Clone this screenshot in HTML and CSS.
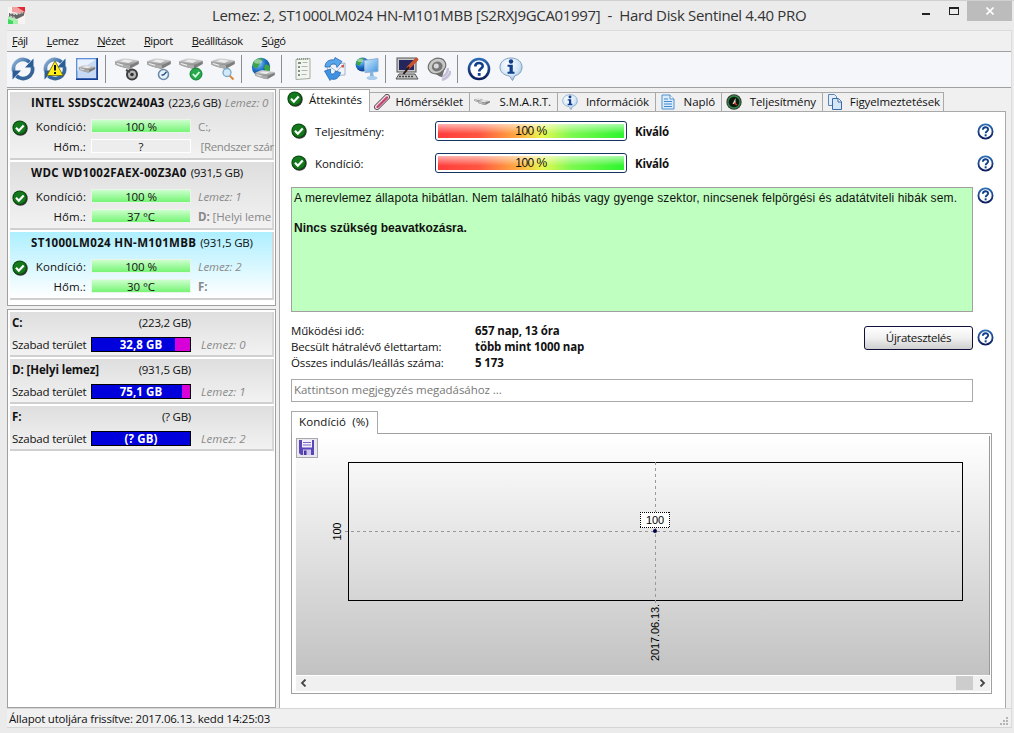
FILE: index.html
```html
<!DOCTYPE html>
<html lang="hu">
  <head>
    <meta charset="UTF-8" />
    <meta name="viewport" content="width=device-width, initial-scale=1.0" />
    <title>Hard Disk Sentinel 4.40 PRO</title>
    <link rel="stylesheet" href="styles.css">
  </head>
  <body>
    <!-- shared icons -->
    <svg class="sprite" width="0" height="0">
      <defs>
        <linearGradient id="gBlue" gradientUnits="userSpaceOnUse" x1="2" y1="2" x2="22" y2="22">
          <stop offset="0" stop-color="#9dbbd8" /><stop offset=".5" stop-color="#2f66a3" /><stop offset="1" stop-color="#3a6496" />
        </linearGradient>
        <linearGradient id="gRing" x1="0" y1="0" x2="0" y2="1">
          <stop offset="0" stop-color="#2d6bb5" /><stop offset="1" stop-color="#0a1d5c" />
        </linearGradient>
        <linearGradient id="gDisk" x1="0" y1="0" x2="0" y2="1">
          <stop offset="0" stop-color="#e0e0e0" /><stop offset="1" stop-color="#8f8f8f" />
        </linearGradient>
        <linearGradient id="gScreen" x1="0" y1="0" x2="1" y2="1">
          <stop offset="0" stop-color="#d8f0ff" /><stop offset="1" stop-color="#3f95e0" />
        </linearGradient>
        <radialGradient id="gGlobe" cx=".35" cy=".3" r=".8">
          <stop offset="0" stop-color="#8fd4ff" /><stop offset=".5" stop-color="#1d6fc4" /><stop offset="1" stop-color="#0a2f78" />
        </radialGradient>
        <radialGradient id="gBubble" cx=".4" cy=".3" r=".8">
          <stop offset="0" stop-color="#ffffff" /><stop offset=".6" stop-color="#d3e6f6" /><stop offset="1" stop-color="#7fa6cf" />
        </radialGradient>
      </defs>
      <symbol id="ok" viewBox="0 0 16 16">
        <circle cx="8.4" cy="8.5" r="7.3" fill="#333" />
        <circle cx="7.7" cy="7.7" r="7.3" fill="#0c4a10" />
        <circle cx="7.7" cy="7.7" r="6.2" fill="#14791c" />
        <path d="M4 7.800l2.800 2.900 4.900-5.300" fill="none" stroke="#fff" stroke-width="2.200" />
      </symbol>
      <symbol id="help" viewBox="0 0 24 24">
        <circle cx="12" cy="12" r="10" fill="#fff" stroke="url(#gRing)" stroke-width="2.600" />
        <path d="M8.300 9.600c0-4.800 7.600-4.600 7.400-.4-.1 2.300-3.500 2.500-3.500 5.300" fill="none" stroke="#0f3f8c" stroke-width="2.600" />
        <rect x="10.800" y="16" width="2.800" height="2.800" fill="#0f3f8c" />
      </symbol>
      <symbol id="info" viewBox="0 0 24 24">
        <path d="M12 1c6.500 0 11 3.800 11 9s-3.500 8-7 8.700L13.500 23.500 10.500 19C4.500 18 1 15 1 10S5.500 1 12 1z" fill="url(#gBubble)" stroke="#7f9fc4" />
        <circle cx="12" cy="4.500" r="2.200" fill="#123f8d" />
        <path d="M8.500 7.800h5.300v7h1.700v2H8.500v-2h2V9.800h-2z" fill="#123f8d" />
      </symbol>
      <symbol id="sync" viewBox="0 0 24 24">
        <path d="M2.700 14A9.400 9.400 0 0 1 18.500 5.200" fill="none" stroke="url(#gBlue)" stroke-width="3.800" />
        <path d="M22.500 1.500v9h-8.500z" fill="#2a5c96" />
        <path d="M21.300 10A9.400 9.400 0 0 1 5.500 18.800" fill="none" stroke="url(#gBlue)" stroke-width="3.800" />
        <path d="M1.500 22.500v-9H10z" fill="#2a5c96" />
      </symbol>
      <symbol id="drive" viewBox="0 0 24 12">
        <path d="M.2 3.500v2.800c0 1 13 4.700 14.500 4.700L23.800 6V3z" fill="#7d7d7d" />
        <path d="M.2 3.500C.2 3 7 .3 9 .3S23.800 2 23.800 3L15 7.200C13 7.200.2 4 .2 3.500z" fill="url(#gDisk)" />
        <path d="M5 3.500l5-1.800 8 1-4.500 2.200z" fill="#ececec" />
        <path d="M15 7.200V11C13 11 .2 7.300.2 6.300V3.500C.2 4 13 7.200 15 7.200z" fill="#ababab" />
        <path d="M2 5.500l6 1.800" stroke="#f4f4f4" />
      </symbol>
      <symbol id="globe" viewBox="0 0 20 20">
        <circle cx="10" cy="10" r="9.200" fill="url(#gGlobe)" />
        <path d="M3 4c3-3 7-3.500 9-2-1 3-3 2-3 5-2 1-1 4-4 4C2 11 1 8 3 4zM14 8c2-1 4 0 5 2 0 4-2 6-4 7-2-2 0-4-2-6z" fill="#3da542" />
        <ellipse cx="7" cy="4.500" rx="4" ry="2.200" fill="#fff" opacity=".45" />
      </symbol>
    </svg>

    <header class="titlebar">
      <svg class="app-icon" width="17" height="17" viewBox="0 0 17 17">
        <rect width="17" height="17" fill="#f8f4f2" />
        <path d="M4 0h13v7L4 5z" fill="#f3a0a0" /><path d="M9 0h8v5z" fill="#e02a35" />
        <path d="M0 9l10 4v4H0z" fill="#a8efb0" /><path d="M0 12l5 2v3H0z" fill="#3fd860" />
        <path d="M1 6l7 1 8-2v3.500L9 12 1 9.500z" fill="#666" /><path d="M2 6.500l6 1.200 7-2M2 9l5 1.500" stroke="#ddd" stroke-dasharray="2 1" fill="none" />
      </svg>
      <h1 class="title">Lemez: 2, ST1000LM024 HN-M101MBB [S2RXJ9GCA01997]&nbsp; -&nbsp; Hard Disk Sentinel 4.40 PRO</h1>
      <div class="win-buttons">
        <span class="win-min"></span>
        <span class="win-max"></span>
        <span class="win-close">
          <svg width="8" height="8" viewBox="0 0 8 8"><path d="M.5.500l7 7M7.500.500l-7 7" stroke="#fff" stroke-width="1.600" /></svg>
        </span>
      </div>
    </header>

    <div class="client">
      <nav class="menu">
        <span><u>F</u>ájl</span>
        <span><u>L</u>emez</span>
        <span><u>N</u>ézet</span>
        <span><u>R</u>iport</span>
        <span><u>B</u>eállítások</span>
        <span><u>S</u>úgó</span>
      </nav>

      <div class="toolbar">
        <svg viewBox="0 0 24 24"><use href="#sync" /></svg>
        <svg viewBox="0 0 24 24">
          <use href="#sync" />
          <path d="M12 4L20 18.500H4z" fill="#ffee1a" stroke="#6b6400" stroke-width=".8" />
          <path d="M12 8v5.500M12 15v2" stroke="#111" stroke-width="2" />
        </svg>
        <svg viewBox="0 0 24 24">
          <rect x="1" y="1" width="22" height="22" fill="#173d93" />
          <rect x="1" y="1" width="20.500" height="20.500" fill="#5f90d6" />
          <rect x="2.500" y="2.500" width="18.500" height="18.500" fill="#c6daf5" />
          <path d="M2.500 2.500H21L2.500 14z" fill="#e9f2fc" />
          <use href="#drive" x="3.500" y="7.500" width="17" height="9" />
        </svg>
        <i class="sep"></i>
        <svg viewBox="0 0 24 24">
          <use href="#drive" x="0" y="1" width="24" height="12" />
          <circle cx="17" cy="17.500" r="5" fill="#b5b5b5" stroke="#3d3d3d" stroke-width="2" />
          <circle cx="17" cy="17.500" r="1.800" fill="#333" />
          <path d="M11 13l4 2" stroke="#444" stroke-width="2" />
        </svg>
        <svg viewBox="0 0 24 24">
          <use href="#drive" x="0" y="1" width="24" height="12" />
          <circle cx="16.500" cy="17.500" r="5" fill="#e8f2fa" stroke="#6b8cab" stroke-width="1.600" />
          <path d="M16.500 18l3-3.200M16.500 18h-2" stroke="#1f4f85" stroke-width="1.300" />
        </svg>
        <svg viewBox="0 0 24 24">
          <use href="#drive" x="0" y="1" width="24" height="12" />
          <circle cx="17" cy="17" r="6" fill="#27a84d" stroke="#118036" />
          <path d="M13.800 17l2.600 2.700 4-4.700" fill="none" stroke="#d7ffdf" stroke-width="1.800" />
        </svg>
        <svg viewBox="0 0 24 24">
          <use href="#drive" x="0" y="1" width="24" height="12" />
          <path d="M18.500 18.500l4 4" stroke="#d98b3c" stroke-width="2.200" />
          <circle cx="16" cy="15.500" r="4" fill="#cfeafa" stroke="#7ca6c4" stroke-width="1.300" />
        </svg>
        <i class="sep"></i>
        <svg viewBox="0 0 24 24">
          <use href="#globe" x="0" y="0" width="20" height="20" />
          <use href="#drive" x="4" y="12" width="20" height="12" />
        </svg>
        <i class="sep"></i>
        <svg viewBox="0 0 24 24">
          <path d="M5 2.500l14-1v20l-14 1z" fill="#f3f5f1" stroke="#a3ada0" />
          <path d="M7 6h3M7 10h2M7 14h2M7 18h2" stroke="#5d6e5a" stroke-width="1.500" />
          <path d="M11.500 5.500h5M10.500 9.500h6M10.500 13.500h6M10.500 17.500h5" stroke="#b0b8ae" />
          <path d="M6 2h12" stroke="#7f8c7c" stroke-dasharray="1 1" stroke-width="1.500" />
        </svg>
        <svg viewBox="0 0 24 24">
          <path d="M4 8l18-2v12l-17 1z" fill="#eef3f9" stroke="#93a6c0" stroke-width=".8" />
          <path d="M5.500 8.500l8 6 8-8" fill="none" stroke="#a9b8cc" />
          <rect x="18.500" y="8" width="2.500" height="2.500" fill="#d8544c" />
          <path d="M1.500 14l6-2v4c2 2 4 1 5-2l5 1.500c-1 5-5 8-9 6.500L7 23.500z" fill="#3d92e2" stroke="#1c5fae" stroke-width=".7" />
          <path d="M7 10C7.500 7 10 6 13 7.500l1 3 5-6-7-4-1 2.500C6 2 2 5 2 10z" fill="#58a5ea" stroke="#1c5fae" stroke-width=".7" />
        </svg>
        <svg viewBox="0 0 24 24">
          <use href="#globe" x="0" y="0" width="15" height="15" />
          <path d="M9 3.500l14-2v13l-13 1z" fill="url(#gScreen)" stroke="#8fb0d4" />
          <path d="M15 15l3 0 1 5h-4z" fill="#8ab4dd" />
          <ellipse cx="17" cy="21" rx="5.500" ry="2" fill="#a9cdec" />
        </svg>
        <i class="sep"></i>
        <svg viewBox="0 0 24 24">
          <rect x="2" y="1" width="19" height="14" fill="#c9c9c9" stroke="#555" />
          <rect x="4" y="3" width="15" height="10" fill="#22265c" />
          <path d="M4 17h16l3 5H1z" fill="#c4c4c4" stroke="#555" /><path d="M4 19.500h14" stroke="#444" stroke-dasharray="2 1" stroke-width="1.500" />
          <path d="M21.500 2.500l-8 8" stroke="#c9502f" stroke-width="3.600" stroke-linecap="round" />
          <path d="M14 10l-5.500 7" stroke="#2a1712" stroke-width="2" />
        </svg>
        <svg viewBox="0 0 24 24">
          <path d="M15 20c4-2 6-5 6-9M15 23c5-2 8-5 8.500-9" fill="none" stroke="#c5c0d8" stroke-width="2.500" />
          <path d="M13 1c5 0 6 6 5 10l-3 9c-3 0-9-5-11-8C5 5 8 1 13 1z" fill="#6c6c6c" />
          <ellipse cx="10" cy="9" rx="9" ry="7.500" fill="#c9c9c9" stroke="#707070" stroke-width="1.200" transform="rotate(-25 10 9)" />
          <ellipse cx="10" cy="9.500" rx="5.500" ry="4.800" fill="#777" transform="rotate(-25 10 9)" /><circle cx="9.300" cy="9" r="2.500" fill="#d8d8d8" />
        </svg>
        <i class="sep"></i>
        <svg viewBox="0 0 24 24"><use href="#help" /></svg>
        <svg viewBox="0 0 24 24"><use href="#info" /></svg>
      </div>

      <main class="main">
        <aside class="side">
          <section class="box disks">
            <div class="disk">
              <div class="disk__name"><b class="narrow">INTEL SSDSC2CW240A3</b> <span>(223,6 GB)</span> <em>Lemez: 0</em></div>
              <svg class="disk__ok" width="16" height="16"><use href="#ok" /></svg>
              <span class="disk__label">Kondíció:</span><span class="meter">100 %</span><span class="disk__note">C:,</span>
              <span class="disk__label">Hőm.:</span><span class="meter meter--empty">?</span><span class="disk__note disk__note--long">&nbsp;[Rendszer szár</span>
            </div>
            <div class="disk">
              <div class="disk__name"><b>WDC WD1002FAEX-00Z3A0</b> <span>(931,5 GB)</span></div>
              <svg class="disk__ok" width="16" height="16"><use href="#ok" /></svg>
              <span class="disk__label">Kondíció:</span><span class="meter">100 %</span><em class="disk__note">Lemez: 1</em>
              <span class="disk__label">Hőm.:</span><span class="meter">37 °C</span><span class="disk__note"><b>D:</b> [Helyi leme</span>
            </div>
            <div class="disk disk--active">
              <div class="disk__name"><b>ST1000LM024 HN-M101MBB</b> <span>(931,5 GB)</span></div>
              <svg class="disk__ok" width="16" height="16"><use href="#ok" /></svg>
              <span class="disk__label">Kondíció:</span><span class="meter">100 %</span><em class="disk__note">Lemez: 2</em>
              <span class="disk__label">Hőm.:</span><span class="meter">30 °C</span><span class="disk__note"><b>F:</b></span>
            </div>
          </section>

          <section class="box volumes">
            <div class="volume">
              <b>C:</b><span class="volume__size">(223,2 GB)</span>
              <span class="volume__label">Szabad terület</span>
              <span class="usage"><i style="width: 15%"></i><b>32,8 GB</b></span>
              <em>Lemez: 0</em>
            </div>
            <div class="volume">
              <b>D: [Helyi lemez]</b><span class="volume__size">(931,5 GB)</span>
              <span class="volume__label">Szabad terület</span>
              <span class="usage"><i style="width: 8%"></i><b>75,1 GB</b></span>
              <em>Lemez: 1</em>
            </div>
            <div class="volume">
              <b>F:</b><span class="volume__size">(? GB)</span>
              <span class="volume__label">Szabad terület</span>
              <span class="usage"><b>(? GB)</b></span>
              <em>Lemez: 2</em>
            </div>
          </section>
        </aside>

        <section class="content">
          <div class="tabs">
            <div class="tab tab--active"><svg width="16" height="16"><use href="#ok" /></svg><span>Áttekintés</span></div>
            <div class="tab tab--temp">
              <svg width="16" height="16" viewBox="0 0 16 16"><path d="M3 13L13 3" stroke="#5d4450" stroke-width="6" stroke-linecap="round" /><path d="M3 13L13 3" stroke="#e9dfe4" stroke-width="4.200" stroke-linecap="round" /><path d="M3.500 13L13 3.500" stroke="#c4426f" stroke-width="2.400" stroke-linecap="round" /></svg>
              <span>Hőmérséklet</span>
            </div>
            <div class="tab tab--smart">
              <svg width="16" height="16" viewBox="0 0 16 16"><use href="#drive" x="0" y="4" width="9" height="5" /><use href="#drive" x="4" y="5" width="12" height="7" /></svg>
              <span>S.M.A.R.T.</span>
            </div>
            <div class="tab tab--info"><svg width="16" height="16"><use href="#info" /></svg><span>Információk</span></div>
            <div class="tab tab--log">
              <svg width="16" height="16" viewBox="0 0 16 16"><path d="M2 1h8l4 4v10H2z" fill="#dcecfb" stroke="#4f8fd0" /><path d="M10 1v4h4" fill="#fff" stroke="#4f8fd0" /><path d="M4 5h4M4 7.500h8M4 10h8M4 12.500h8" stroke="#3f86cf" /></svg>
              <span>Napló</span>
            </div>
            <div class="tab tab--perf">
              <svg width="16" height="16" viewBox="0 0 16 16"><circle cx="8" cy="8" r="7.700" fill="#3b3b3b" /><circle cx="8" cy="8" r="6" fill="#0e1a10" stroke="#2f8a45" stroke-width="1.300" /><path d="M9.500 4L6.500 10h3z" fill="#e8e0d0" /><path d="M8 9l3 2" stroke="#d33" stroke-width="1.500" /></svg>
              <span>Teljesítmény</span>
            </div>
            <div class="tab tab--alert">
              <svg width="16" height="16" viewBox="0 0 16 16"><path d="M1.500.500h6l2 2v9h-8z" fill="#e2edf9" stroke="#5d83b8" /><path d="M5.500 4.500h6l3 3v8h-9z" fill="#d4e6f8" stroke="#3c69a8" /><path d="M11 4.500v3.500h3.500" fill="#fff" stroke="#3c69a8" /></svg>
              <span>Figyelmeztetések</span>
            </div>
          </div>

          <div class="page">
            <div class="row">
              <svg width="16" height="16"><use href="#ok" /></svg>
              <span class="row__label">Teljesítmény:</span>
              <div class="health"><span>100 %</span></div>
              <b>Kiváló</b>
              <svg class="help" width="17" height="17"><use href="#help" /></svg>
            </div>
            <div class="row">
              <svg width="16" height="16"><use href="#ok" /></svg>
              <span class="row__label">Kondíció:</span>
              <div class="health"><span>100 %</span></div>
              <b>Kiváló</b>
              <svg class="help" width="17" height="17"><use href="#help" /></svg>
            </div>

            <div class="status-row">
              <div class="status-text">
                <p>A merevlemez állapota hibátlan. Nem található hibás vagy gyenge szektor, nincsenek felpörgési és adatátviteli hibák sem.</p>
                <p class="advice"><b>Nincs szükség beavatkozásra.</b></p>
              </div>
              <svg width="17" height="17"><use href="#help" /></svg>
            </div>

            <div class="stats">
              <dl>
                <dt>Működési idő:</dt><dd>657 nap, 13 óra</dd>
                <dt>Becsült hátralévő élettartam:</dt><dd>több mint 1000 nap</dd>
                <dt>Összes indulás/leállás száma:</dt><dd>5 173</dd>
              </dl>
              <button class="retest"><span>Újratesztelés</span></button>
              <svg width="17" height="17"><use href="#help" /></svg>
            </div>

            <div class="comment"><span>Kattintson megjegyzés megadásához ...</span></div>

            <div class="graph-tab"><span>Kondíció&nbsp; (%)</span></div>
            <div class="graph">
              <div class="graph__area">
                <svg width="693" height="239" viewBox="0 0 693 239">
                  <!-- save button -->
                  <rect x=".5" y="2.500" width="21" height="19" fill="#e9e7ef" stroke="#a9a9a9" />
                  <path d="M3 4h15v15H5l-2-2z" fill="#5b45b8" />
                  <rect x="6" y="4" width="10" height="7.500" fill="#f2f0fa" /><path d="M7 6.500h8M7 9h8" stroke="#7d6bc9" />
                  <rect x="7" y="13.500" width="8" height="5.500" fill="#cfc8ec" /><rect x="8" y="14.500" width="2.500" height="4.500" fill="#4a37a0" />

                  <rect x="52.500" y="26.500" width="614" height="138" fill="none" stroke="#000" />
                  <path d="M49 95.500H667" stroke="#999" stroke-dasharray="3 3" />
                  <path d="M359.500 26V169" stroke="#999" stroke-dasharray="3 3" />
                  <rect x="344" y="76" width="30" height="16" fill="#fff" />
                  <path d="M344 76.500h30M344 91.500h30M344.500 76v16M373.500 76v16" stroke="#000" stroke-dasharray="1 1" />
                  <text x="359" y="88" text-anchor="middle" textLength="18">100</text>
                  <circle cx="359" cy="95" r="2" fill="#00004a" />
                  <text transform="translate(45 95.500) rotate(-90)" text-anchor="middle" textLength="18">100</text>
                  <text transform="translate(363 225) rotate(-90)" textLength="57">2017.06.13.</text>
                </svg>
              </div>
              <div class="scroll">
                <svg width="7" height="8" viewBox="0 0 7 8"><path d="M5.500.500L2 4l3.500 3.500" fill="none" stroke="#444" stroke-width="1.800" /></svg>
                <i></i>
                <svg width="7" height="8" viewBox="0 0 7 8"><path d="M1.500.500L5 4 1.500 7.500" fill="none" stroke="#444" stroke-width="1.800" /></svg>
              </div>
            </div>
          </div>
        </section>
      </main>

      <footer class="statusbar">
        <span>Állapot utoljára frissítve: 2017.06.13. kedd 14:25:03</span>
        <svg width="9" height="9" viewBox="0 0 9 9" fill="#b5b5b5"><path d="M6 0h2v2H6zM3 3h2v2H3zM6 3h2v2H6zM0 6h2v2H0zM3 6h2v2H3zM6 6h2v2H6z" /></svg>
      </footer>
    </div>
  </body>
</html>
```
FILE: styles.css
```css
* {
  margin: 0;
  padding: 0;
  box-sizing: border-box;
}
body {
  width: 1014px;
  height: 733px;
  overflow: hidden;
  background: #ebebeb;
  font-family: "Open Sans", "Noto Sans", sans-serif;
  font-size: 11.5px;
  letter-spacing: -0.1px;
  color: #111;
  white-space: nowrap;
}
svg {
  display: block;
  flex: none;
}
.sprite {
  position: absolute;
}

/* title bar */
.titlebar {
  height: 30px;
  display: flex;
  border-top: 1px solid #d0d0d0;
  padding-left: 8px;
}
.app-icon {
  margin-top: 6px;
}
.title {
  flex: 1;
  padding-left: 187px;
  font-size: 15px;
  font-weight: 400;
  line-height: 29px;
  letter-spacing: -0.33px;
  color: #333;
}
.win-buttons {
  display: flex;
  align-items: flex-start;
  margin-right: 2px;
}
.win-min {
  width: 8px;
  height: 2px;
  margin: 12px 19px 0 0;
  background: #222;
}
.win-max {
  width: 10px;
  height: 8px;
  margin: 6px 8px 0 0;
  border: 1px solid #222;
  border-top-width: 2px;
}
.win-close {
  width: 45px;
  height: 20px;
  display: flex;
  align-items: center;
  justify-content: center;
  background: #bcbcbc;
}

.client {
  width: 1005px;
  height: 698px;
  margin-left: 7px;
  background: #f0f0f0;
  border-top: 1px solid #dcdcdc;
  border-right: 1px solid #dcdcdc;
  border-bottom: 1px solid #d5d5d5;
}
.menu {
  height: 21px;
  padding-left: 5px;
  display: flex;
  gap: 19px;
  line-height: 19px;
  border-bottom: 1px solid #a0a0a0;
  font-size: 11.2px;
  letter-spacing: -0.5px;
}
.toolbar {
  height: 36px;
  display: flex;
  gap: 8px;
  padding: 5px 0 0 4px;
  background: #f4f6f9;
  border-bottom: 1px solid #a0a0a0;
}
.toolbar svg {
  width: 24px;
  height: 24px;
}
.sep {
  width: 1px;
  height: 28px;
  margin: -2px 1px 0 -2px;
  background: #8c8c8c;
}

.main {
  display: flex;
  height: 620px;
  padding-top: 1px;
}
.side {
  width: 269px;
  height: 619px;
  display: flex;
  flex-direction: column;
  gap: 3px;
}
.box {
  background: #fff;
  border: 1px solid #a0a0a0;
  padding: 2px 1px 0 2px;
}
.disks {
  height: 217px;
}
.volumes {
  flex: 1;
}

/* physical disks */
.disk {
  height: 68px;
  margin-bottom: 2px;
  display: grid;
  grid-template-columns: 18px 58px 5px 100px 7px 1fr;
  grid-template-rows: 20px 28px 12px;
  align-items: center;
  background: linear-gradient(#dedede, #f2f2f2);
  border-right: 2px solid #d6d6d6;
  border-bottom: 2px solid #d0d0d0;
}
.disk--active {
  background: linear-gradient(#aeefff, #fff);
}
.disk__name {
  grid-column: 1 / -1;
  padding-left: 21px;
}
.disk__name b {
  letter-spacing: 0.33px;
}
.disk__name .narrow {
  letter-spacing: 0.2px;
}
.disk__name span {
  margin-left: 1px;
  letter-spacing: -0.25px;
}
.disk__name em {
  margin-left: 1px;
}
em {
  color: #8a8a8a;
}
.disk__ok {
  grid-row: 2 / 3;
  margin: 4px 0 0 2px;
}
.disk__label {
  grid-column: 2;
  text-align: right;
  letter-spacing: 0.1px;
}
.meter {
  grid-column: 4;
  height: 14px;
  line-height: 14px;
  text-align: center;
  background: linear-gradient(#ccffcc, #76f576);
  border: 1px solid #eaf5ea;
}
.meter--empty {
  background: #ededed;
  border-color: #fff;
}
.disk__note {
  grid-column: 6;
  color: #888;
}
.disk__note--long {
  letter-spacing: -0.37px;
}

/* volumes */
.volume {
  height: 45px;
  margin-bottom: 2px;
  padding-left: 2px;
  display: grid;
  grid-template-columns: 79px 100px 1fr;
  grid-template-rows: 20px 25px;
  align-items: center;
  background: linear-gradient(#dedede, #f2f2f2);
  border-right: 2px solid #d6d6d6;
  border-bottom: 2px solid #d0d0d0;
}
.volume__size {
  grid-column: 2 / 3;
  text-align: right;
  letter-spacing: -0.25px;
}
.volume__label {
  grid-column: 1;
  letter-spacing: -0.2px;
}
.volume em {
  padding-left: 10px;
  letter-spacing: 0.05px;
}
.usage {
  height: 15px;
  position: relative;
  display: flex;
  justify-content: flex-end;
  background: #0000dc;
  border: 1px solid #000;
}
.usage i {
  background: #d800d8;
}
.usage b {
  position: absolute;
  inset: 0;
  line-height: 14px;
  text-align: center;
  letter-spacing: 0.1px;
  color: #fff;
}

/* tabs */
.content {
  width: 727px;
  margin-left: 3px;
}
.tabs {
  display: flex;
  align-items: flex-end;
  height: 22px;
  padding-right: 61px;
}
.tab {
  height: 19px;
  display: flex;
  align-items: center;
  justify-content: space-between;
  padding: 0 6px 1px 4px;
  border: 1px solid #a9a9a9;
  border-width: 1px 1px 0 0;
  background: #f0f0f0;
}
.tab--active {
  width: 91px;
  height: 23px;
  padding: 0 7px 4px 7px;
  margin-bottom: -1px;
  border-left-width: 1px;
  background: #fff;
  z-index: 1;
}
.tab--temp { width: 100px; }
.tab--smart { width: 88px; }
.tab--info { width: 98px; }
.tab--log { width: 66px; }
.tab--perf { width: 101px; }
.tab--alert { width: 121px; padding-right: 3px; }

.page {
  height: 597px;
  padding: 3px 0 0 11px;
  background: #fff;
  border: 1px solid #a9a9a9;
  border-bottom: 0;
}
.row {
  height: 32px;
  display: flex;
  align-items: center;
}
.row__label {
  width: 120px;
  margin-left: 8px;
}
.row b {
  margin-left: 8px;
  letter-spacing: -0.25px;
}
.row .help {
  margin: 0 11px 0 auto;
}
.health {
  width: 192px;
  height: 20px;
  padding: 2px;
  border: 1px solid #17335f;
  border-radius: 3px;
}
.health span {
  display: block;
  height: 14px;
  line-height: 14px;
  text-align: center;
  font-family: "Liberation Sans", Arial, sans-serif;
  font-size: 12px;
  letter-spacing: -0.5px;
  background:
    linear-gradient(rgba(255, 255, 255, 0.6), rgba(255, 255, 255, 0) 70%),
    linear-gradient(90deg, #ff3c3c, #ff5540 22%, #ffb040 44%, #e8f850 56%, #7cf850 72%, #2cf52c);
}

.status-row {
  display: flex;
  margin-top: 8px;
  gap: 4px;
}
.status-text {
  width: 682px;
  height: 125px;
  padding: 3px 2px;
  background: #bfffbf;
  border: 1px solid #a0a0a0;
  font-family: "Liberation Sans", Arial, sans-serif;
  font-size: 12px;
  line-height: 15px;
  letter-spacing: 0.14px;
}
.advice {
  margin-top: 15px;
  letter-spacing: 0;
}

.stats {
  display: flex;
  margin-top: 11px;
  height: 56px;
}
.stats dl {
  width: 573px;
  display: grid;
  grid-template-columns: 184px 1fr;
  grid-auto-rows: 16px;
  line-height: 16px;
}
.stats dt {
  letter-spacing: -0.15px;
}
.stats dd {
  font-weight: 700;
}
.stats svg {
  margin: 6px 0 0 4px;
}
.retest {
  width: 109px;
  height: 24px;
  margin-top: 3px;
  padding-bottom: 2px;
  font: inherit;
  letter-spacing: -0.3px;
  color: #111;
  background: linear-gradient(#fff, #f0f0f0 50%, #cfcfcf);
  border: 1px solid #10103c;
  border-radius: 3px;
}

.comment {
  width: 682px;
  height: 23px;
  padding-left: 2px;
  line-height: 20px;
  letter-spacing: -0.05px;
  border: 1px solid #a9a9a9;
  color: #777;
}

/* graph */
.graph-tab {
  width: 87px;
  height: 23px;
  margin-top: 9px;
  padding-left: 7px;
  line-height: 20px;
  letter-spacing: 0.1px;
  position: relative;
  z-index: 1;
  background: #fff;
  border: 1px solid #a9a9a9;
  border-bottom: 0;
}
.graph {
  width: 701px;
  height: 261px;
  margin-top: -1px;
  padding: 2px 1px 0 4px;
  border: 1px solid #a0a0a0;
}
.graph__area {
  height: 239px;
  width: 694px;
  background: linear-gradient(#fff, #c2c2c2);
  border-right: 1px solid #999;
}
.graph__area text {
  font-family: "Liberation Sans", Arial, sans-serif;
  font-size: 11px;
  letter-spacing: 0;
}
.scroll {
  height: 15px;
  margin-top: 1px;
  padding: 0 4px 1px 4px;
  display: flex;
  align-items: center;
  background: #f0f0f0;
}
.scroll i {
  width: 17px;
  height: 14px;
  margin: 0 6px 0 auto;
  background: #cdcdcd;
}

.statusbar {
  height: 18px;
  display: flex;
  justify-content: space-between;
  padding-left: 2px;
  line-height: 20px;
  letter-spacing: -0.21px;
  border-top: 1px solid #d5d5d5;
}
.statusbar svg {
  margin: 8px 2px 0 0;
}
```
